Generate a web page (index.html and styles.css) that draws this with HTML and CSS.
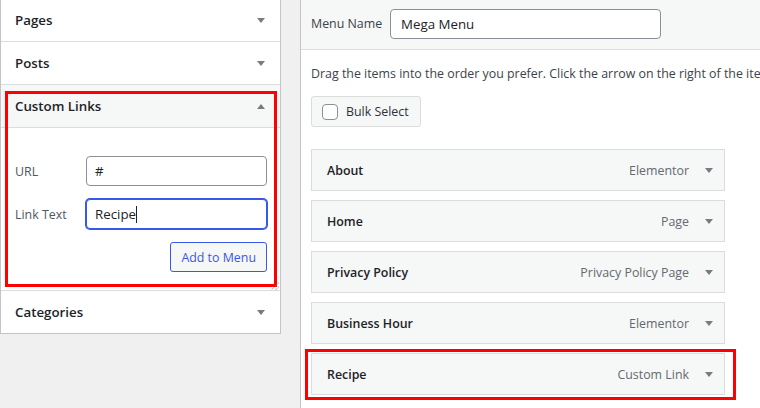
FILE: index.html
```html
<!DOCTYPE html>
<html lang="en">
<head>
<meta charset="utf-8">
<title>Menus</title>
<link rel="stylesheet" href="styles.css">
</head>
<body>
<div class="page">
  <aside class="sidebar">
    <div class="acc-row"><span>Pages</span><svg class="tri" width="8" height="5" viewBox="0 0 8 5"><path d="M0 0h8L4 5z"/></svg></div>
    <div class="acc-row"><span>Posts</span><svg class="tri" width="8" height="5" viewBox="0 0 8 5"><path d="M0 0h8L4 5z"/></svg></div>
    <section class="custom">
      <div class="acc-row open"><span>Custom Links</span><svg class="tri" width="8" height="5" viewBox="0 0 8 5"><path d="M0 5h8L4 0z"/></svg></div>
      <div class="custom-body">
        <div class="field"><label class="field-label">URL</label><div class="input">#</div></div>
        <div class="field"><label class="field-label">Link Text</label><div class="input focus">Recipe<span class="caret"></span></div></div>
        <div class="actions"><button class="btn-add" type="button">Add to Menu</button></div>
      </div>
      <div class="highlight hl-left"></div>
      <svg class="grip" width="8" height="8" viewBox="0 0 8 8"><path d="M8 0.5L0.5 8M8 4.5L4.5 8"/></svg>
    </section>
    <div class="acc-row last"><span>Categories</span><svg class="tri" width="8" height="5" viewBox="0 0 8 5"><path d="M0 0h8L4 5z"/></svg></div>
  </aside>

  <main class="editor">
    <div class="editor-head">
      <span class="name-label">Menu Name</span>
      <div class="input name">Mega Menu</div>
    </div>
    <div class="editor-body">
      <p class="hint">Drag the items into the order you prefer. Click the arrow on the right of the item to reveal additional configuration options.</p>
      <button class="bulk" type="button"><span class="cb"></span>Bulk Select</button>
      <ul class="menu-items">
        <li class="item"><span class="title">About</span><span class="type">Elementor</span><svg class="tri" width="8" height="5" viewBox="0 0 8 5"><path d="M0 0h8L4 5z"/></svg></li>
        <li class="item"><span class="title">Home</span><span class="type">Page</span><svg class="tri" width="8" height="5" viewBox="0 0 8 5"><path d="M0 0h8L4 5z"/></svg></li>
        <li class="item"><span class="title">Privacy Policy</span><span class="type">Privacy Policy Page</span><svg class="tri" width="8" height="5" viewBox="0 0 8 5"><path d="M0 0h8L4 5z"/></svg></li>
        <li class="item"><span class="title">Business Hour</span><span class="type">Elementor</span><svg class="tri" width="8" height="5" viewBox="0 0 8 5"><path d="M0 0h8L4 5z"/></svg></li>
        <li class="item"><span class="title">Recipe</span><span class="type">Custom Link</span><svg class="tri" width="8" height="5" viewBox="0 0 8 5"><path d="M0 0h8L4 5z"/></svg><div class="highlight hl-item"></div></li>
      </ul>
    </div>
  </main>
</div>
</body>
</html>
```

FILE: styles.css
```css
* { box-sizing: border-box; }
html, body { margin: 0; height: 100%; }
body {
  background: #f0f0f1;
  font-family: "Open Sans", "Noto Sans", sans-serif;
  font-size: 12.4px;
  color: #3c434a;
  overflow: hidden;
}
.page {
  display: flex;
  align-items: flex-start;
  gap: 19px;
  height: 408px;
}

/* Sidebar accordion */
.sidebar {
  width: 281px;
  flex: none;
  margin-top: -1px;
  background: #fff;
  border: 1px solid #c3c4c7;
  border-top: 0;
}
.acc-row {
  height: 43px;
  display: flex;
  align-items: center;
  justify-content: space-between;
  padding: 0 15px 0 14px;
  border-bottom: 1px solid #dcdcde;
  font-size: 13.3px;
  font-weight: 600;
  color: #1d2327;
}
.acc-row.open { background: #f6f7f7; }
.acc-row.last { height: 42px; border-bottom: 0; }
.tri { display: block; fill: #787c82; flex: none; }

.custom { position: relative; }
.custom-body {
  height: 163px;
  padding: 28px 13px 0 14px;
  border-bottom: 1px solid #dcdcde;
}
.field {
  display: grid;
  grid-template-columns: 71px 1fr;
  align-items: center;
  margin-bottom: 13px;
}
.field-label { color: #50575e; font-size: 12.4px; }
.input {
  height: 30px;
  display: flex;
  align-items: center;
  padding: 0 8px;
  border: 1px solid #8c8f94;
  border-radius: 4px;
  background: #fff;
  font-size: 13.3px;
  color: #1d2327;
}
.input.focus {
  border-color: #3858e9;
  box-shadow: 0 0 0 1px #3858e9;
}
.caret {
  display: inline-block;
  width: 1px;
  height: 17px;
  background: #1d2327;
}
.actions { display: flex; justify-content: flex-end; }
.btn-add {
  height: 30px;
  padding: 0 10px;
  border: 1px solid #3858e9;
  border-radius: 3px;
  background: #f6f7f7;
  color: #3858e9;
  font-family: inherit;
  font-size: 12.4px;
}
.grip {
  position: absolute;
  right: 1px;
  bottom: 1px;
  fill: none;
  stroke: #787c82;
  stroke-width: 1;
  stroke-dasharray: 1 1;
}

/* Red annotation boxes */
.highlight {
  position: absolute;
  border: 3px solid #ff0000;
  pointer-events: none;
}
.hl-left { left: 4px; top: 6px; right: 3px; bottom: 4px; }
.hl-item { left: -7px; top: -5px; right: -12px; bottom: -6px; }

/* Menu editor */
.editor {
  flex: 1;
  min-width: 0;
  align-self: stretch;
  background: #fff;
  border-left: 1px solid #c3c4c7;
}
.editor-head {
  height: 50px;
  display: flex;
  align-items: flex-start;
  padding: 9px 0 0 10px;
  background: #f6f7f7;
  border-bottom: 1px solid #dcdcde;
}
.name-label {
  width: 79px;
  line-height: 30px;
  color: #3c434a;
}
.input.name { width: 271px; padding: 0 10px; }

.editor-body { padding: 0 10px; }
.hint {
  margin: 14px 0 12px;
  line-height: 20px;
  white-space: nowrap;
  color: #3c434a;
}
.bulk {
  height: 31px;
  display: flex;
  align-items: center;
  gap: 8px;
  padding: 0 11px 0 10px;
  border: 1px solid #dcdcde;
  border-radius: 3px;
  background: #f6f7f7;
  color: #2c3338;
  font-family: inherit;
  font-size: 12.4px;
}
.cb {
  width: 16px;
  height: 16px;
  border: 1px solid #8c8f94;
  border-radius: 4px;
  background: #fff;
}
.menu-items {
  list-style: none;
  margin: 22px 0 0;
  padding: 0;
}
.item {
  position: relative;
  width: 414px;
  height: 42px;
  display: flex;
  align-items: center;
  margin-bottom: 9px;
  padding: 0 11px 0 15px;
  background: #f6f7f7;
  border: 1px solid #dcdcde;
}
.item .title {
  flex: 1;
  font-weight: 600;
  color: #1d2327;
}
.item .type {
  margin-right: 16px;
  color: #646970;
}
```
